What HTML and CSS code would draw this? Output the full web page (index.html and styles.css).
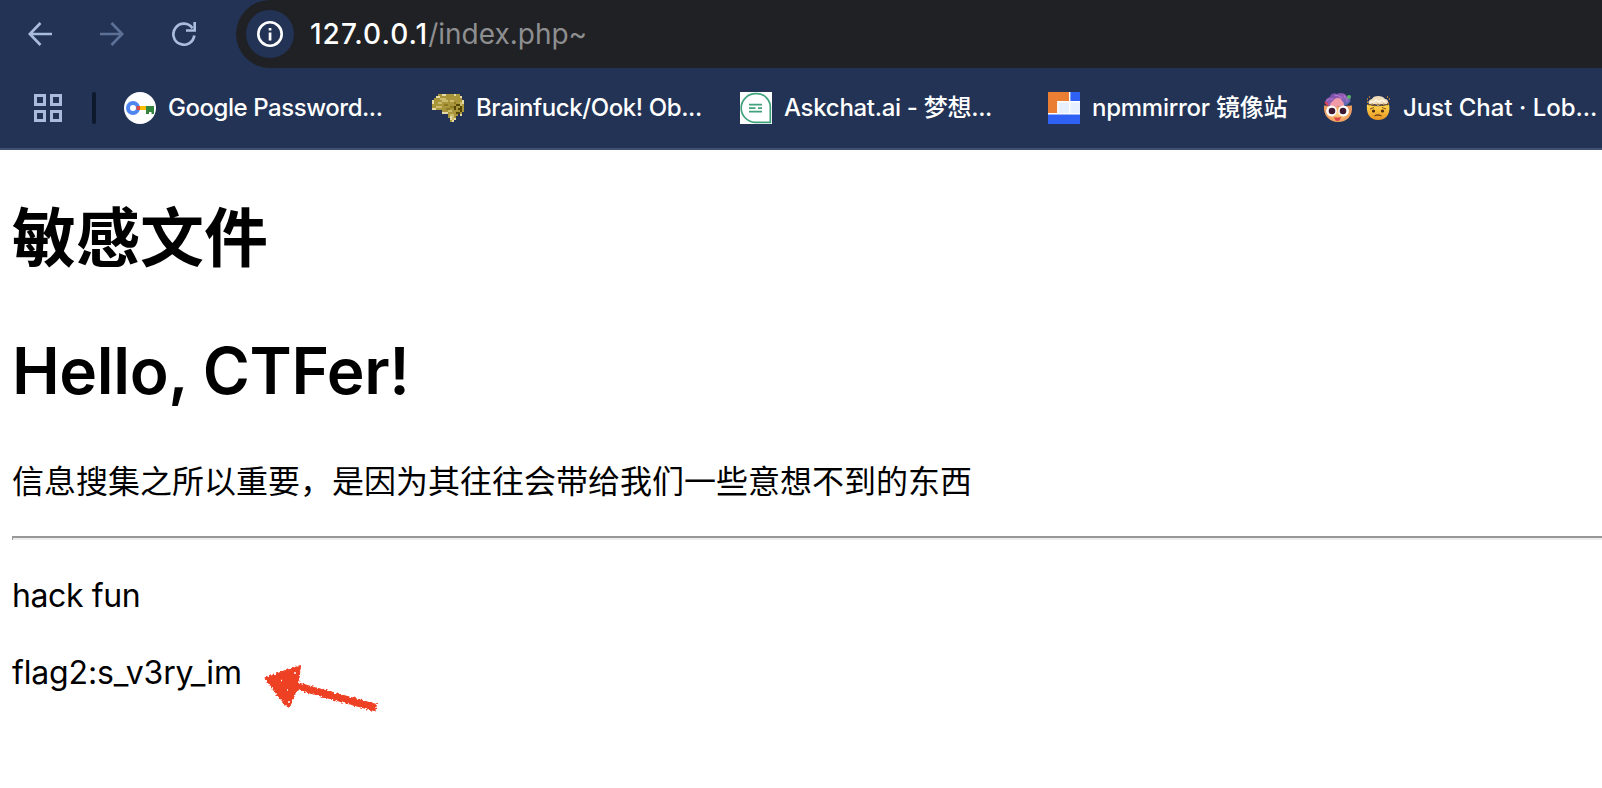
FILE: index.html
```html
<!DOCTYPE html>
<html lang="zh-CN">
<head>
  <meta charset="UTF-8">
  <meta name="viewport" content="width=device-width, initial-scale=1.0">
  <title>index.php~</title>
  <link rel="stylesheet" href="styles.css">
</head>
<body>

  <header class="browser">
    <div class="toolbar">
      <nav class="nav-buttons">
        <svg class="nav-icon" viewBox="0 0 24 24"><path d="M24 12H2M12.5 1 1.8 12l10.7 11"/></svg>
        <svg class="nav-icon disabled" viewBox="0 0 24 24"><path d="M0 12h22M11.5 1l10.700 11-10.700 11"/></svg>
        <svg class="nav-icon" viewBox="0 0 24 24"><path d="M22.300 13.500A10.500 10.500 0 1 1 20.500 6.200"/><path d="M22.700 0v8.500H14"/></svg>
      </nav>
      <div class="address-bar">
        <span class="site-info">
          <svg width="26" height="26" viewBox="0 0 26 26"><circle cx="13" cy="13" r="11.700" fill="none" stroke="#fff" stroke-width="2.600"/><path d="M11.700 7h2.700v2.400h-2.700zM11.700 11.500h2.700v8h-2.700z" fill="#fff"/></svg>
        </span>
        <span class="url"><span class="host">127.0.0.1</span><span class="path">/index.php~</span></span>
      </div>
    </div>

    <div class="bookmarks">
      <svg class="apps" viewBox="0 0 28 28"><path d="M1.500 1.500h9v9h-9zM17.500 1.500h9v9h-9zM1.500 17.500h9v9h-9zM17.500 17.500h9v9h-9z"/></svg>
      <span class="separator"></span>

      <a class="bookmark">
        <svg class="favicon" viewBox="0 0 32 32">
          <circle cx="16" cy="16" r="16" fill="#fff"/>
          <path d="M16 14h6v4h-6z" fill="#fbbc04"/>
          <path d="M22 14h8v8h-2.500v-2h-2.500v2h-3z" fill="#34853d"/>
          <circle cx="9" cy="16" r="5" fill="none" stroke="#4f86f0" stroke-width="4"/>
          <path d="M12.500 14h3.500v4h-3.500z" fill="#dc4a3d"/>
        </svg>
        <span class="label google">Google Password...</span>
      </a>

      <a class="bookmark">
        <svg class="favicon" viewBox="0 0 16 16" shape-rendering="crispEdges">
          <path d="M3 1h11v1h1v2h1v6h-1v1h-2v1h-1v2h-1v1H9v-2H8v-2H7v-1H5V9H1V8H0V4h1V3h1V2h1z" fill="#aa963a"/>
          <path d="M5 1h2v1H5zM2 2h2v1H2zM11 1h1v1h-1zM0 4h1v2H0zM14 2h1v1h-1zM15 4h1v2h-1zM0 8h2v1H0zM5 10h3v1H5zM9 12h1v2H9zM11 13h1v1h-1zM10 14h1v1h-1zM14 11h1v1h-1z" fill="#e5d9a6"/>
          <path d="M4 3h3v1H4zM3 5h2v1H3zM5 4h3v1H5zM9 4h2v1H9zM2 7h3v1H2zM8 9h2v1H8zM9 11h2v1H9zM10 12h1v2h-1zM14 5h1v2h-1z" fill="#cbbb6c"/>
          <path d="M6 6h2v1H6zM9 7h2v1H9zM7 8h2v1H7zM11 5h1v1h-1z" fill="#8d7a25"/>
          <path d="M12 6h2v1h-2zM11 7h1v2h-1zM14 7h1v3h-1zM12 10h2v1h-2zM13 8h1v1h-1z" fill="#564606"/>
        </svg>
        <span class="label brain">Brainfuck/Ook! Ob...</span>
      </a>

      <a class="bookmark">
        <svg class="favicon" viewBox="0 0 32 32">
          <path d="M0 0h32v32H0z" fill="#fff"/>
          <path d="M16 1.700h1A13.500 13.500 0 0 1 30.300 15v15.300H15A14.300 14.300 0 0 1 16 1.700z" fill="none" stroke="#42a27d" stroke-width="1.700"/>
          <path d="M9 12.700h13M9 19.700h13M9 16.200h6.500M18 16.200h4" stroke="#42a27d" stroke-width="1.700"/>
        </svg>
        <span class="label ask">Askchat.ai - 梦想...</span>
      </a>

      <a class="bookmark npm-item">
        <svg class="favicon" viewBox="0 0 32 32">
          <path d="M0 0h32v32H0z" fill="#2f62f4"/>
          <path d="M0 0h21v10H10v11H0z" fill="#ea7e32"/>
          <path d="M10 10h22v11H10z" fill="#e6f0ff"/>
          <path d="M21.700 0v21.500M9.800 21V9.800H32M0 21.700h32" fill="none" stroke="#fff" stroke-width="1.400"/>
        </svg>
        <span class="label npm">npmmirror 镜像站</span>
      </a>

      <a class="bookmark lobe-item">
        <svg class="favicon" viewBox="0 0 32 32">
          <defs>
            <linearGradient id="cloud" x1="0" y1="0" x2="1" y2="1"><stop offset="0" stop-color="#5f459f"/><stop offset=".5" stop-color="#9a60b6"/><stop offset="1" stop-color="#406fae"/></linearGradient>
            <radialGradient id="skin"><stop offset="0" stop-color="#ffd184"/><stop offset="1" stop-color="#ed9b5d"/></radialGradient>
          </defs>
          <path d="M2 13.500Q15 15 30 13.500C31 24 25 30 16 30S1 23 2 13.500z" fill="url(#skin)"/>
          <path d="M4 12C2 9 5 5 8 5 8 2 12 0 15 2c3-2 9-1 10 3 3 0 5 4 2 6-1 2-4 3-7 3H9c-2 0-4 0-5-2z" fill="url(#cloud)"/>
          <path d="M8 14c0-3 2-4 3-5 2-4 8-4 9 0 2 1 2 4 2 5l-3 1-3-1-3 2z" fill="#f19ba8"/>
          <path d="M4 9q3-3 7-2M22 4q4 2 3 6M12 3q5 0 8 3" fill="none" stroke="#b77bd4"/>
          <path d="M3 10l3 3" stroke="#df4054" stroke-width="2"/>
          <circle cx="27" cy="5" r="2" fill="#5bb766"/>
          <circle cx="9.500" cy="19" r="5.400" fill="#fff"/><circle cx="21.500" cy="19" r="5.400" fill="#fff"/>
          <circle cx="10" cy="19" r="3.300" fill="#3e1931"/><circle cx="21" cy="19" r="3.300" fill="#3e1931"/>
          <path d="M12 25q3.500 1 7 0-1 4-3.500 4T12 25z" fill="#d94345"/>
        </svg>
        <svg class="emoji" viewBox="0 0 24 24">
          <defs><linearGradient id="face" x2="0" y2="1"><stop stop-color="#ffd94b"/><stop offset="1" stop-color="#e99524"/></linearGradient></defs>
          <path d="M1 8.500Q12 12 23 8.500C25 18 20 24 12 24S0 18 1 8.500z" fill="url(#face)"/>
          <path d="M3 8C1 5 5 3 6 3c1-4 11-4 13 0 3 0 4 3 2 5l-4 1-2-1-3 2-3-2-3 1z" fill="#efdcbb"/>
          <path d="M4 6h4l2-2 3 2 3-2 4 2" fill="none" stroke="#fff6df" stroke-width="1.500"/>
          <path d="M2 9l5-1 1 2 4-2 3 2 2-2 5 1" fill="none" stroke="#8f5821" stroke-width=".9"/>
          <path d="M1 3h1M3 1h1M21 1h1M23 3h1M1 6h1M22 7h1" stroke="#e28b28" stroke-width="1.500"/>
          <path d="M4 13l4-1.500M20 13l-4-1.500" stroke="#8a4e16"/>
          <circle cx="7.500" cy="15" r="1.600" fill="#4b2a12"/><circle cx="16.500" cy="15" r="1.600" fill="#4b2a12"/>
          <path d="M8 20.500c1-3 7-3 8 0-2-1-6-1-8 0z" fill="#693a16"/>
        </svg>
        <span class="label lobe">Just Chat · Lob...</span>
      </a>
    </div>
  </header>

  <main class="page">
    <h1 class="title-cn">敏感文件</h1>
    <h1 class="title-en">Hello, CTFer!</h1>
    <p class="intro">信息搜集之所以重要，是因为其往往会带给我们一些意想不到的东西</p>
    <hr>
    <p class="hack">hack fun</p>
    <div class="flag-row">
      <p class="flag">flag2:s_v3ry_im</p>
      <svg class="arrow" viewBox="0 0 124 60">
        <filter id="rough" x="-10%" y="-10%" width="120%" height="120%">
          <feTurbulence type="fractalNoise" baseFrequency=".45" numOctaves="2" seed="4" result="noise"/>
          <feDisplacementMap in="SourceGraphic" in2="noise" scale="4.500" xChannelSelector="R" yChannelSelector="G"/>
        </filter>
        <path d="M5.500 23 41.500 10.500 39.500 28 117.500 49.500 116 56 38 34.500 31 51 27.500 51 16 37z" fill="#ee4023" stroke="#ee4023" stroke-linejoin="round" filter="url(#rough)"/>
        <path d="M22 25.500h1M36 17v2M30 46v2M28 35h1" stroke="#fff" stroke-width="1.500"/>
      </svg>
    </div>
  </main>

</body>
</html>
```

FILE: styles.css
```css
body {
  margin: 0;
  background-color: white;
  color: black;
  font-family: Inter, "Noto Sans CJK SC", sans-serif;
  overflow: hidden;
}
.browser {
  box-sizing: border-box;
  height: 150px;
  background-color: #223356;
  border-bottom: 2px solid #3f5074;
}
.toolbar {
  display: flex;
  height: 68px;
}
.nav-buttons {
  display: flex;
  align-items: center;
  gap: 48px;
  width: 208px;
  padding-left: 28px;
}
.nav-icon {
  width: 24px;
  height: 24px;
  fill: none;
  stroke: #a9bcdc;
  stroke-width: 2.7;
}
.nav-icon.disabled {
  stroke: #5d7095;
}
.address-bar {
  display: flex;
  flex: 1;
  align-items: center;
  padding-left: 10px;
  border-radius: 34px 0 0 34px;
  background-color: #202124;
}
.site-info {
  display: flex;
  align-items: center;
  justify-content: center;
  width: 48px;
  height: 48px;
  margin-right: 16px;
  border-radius: 50%;
  background-color: #223356;
}
.url {
  font-size: 28px;
  line-height: 40px;
  white-space: nowrap;
}
.host {
  color: white;
  font-weight: 500;
  letter-spacing: 1px;
}
.path {
  color: #8e8f91;
}

.bookmarks {
  display: flex;
  align-items: center;
  height: 80px;
  padding-left: 34px;
}
.apps {
  width: 28px;
  height: 28px;
  fill: none;
  stroke: #a9bcdc;
  stroke-width: 3;
}
.separator {
  width: 4px;
  height: 32px;
  margin: 0 28px 0 30px;
  border-radius: 2px;
  background-color: #0e192e;
}
.bookmark {
  display: flex;
  flex: none;
  align-items: center;
  width: 308px;
  color: white;
  font-size: 24px;
  font-weight: 500;
  line-height: 32px;
  white-space: nowrap;
}
.google {
  letter-spacing: -0.45px;
}
.brain {
  letter-spacing: -0.4px;
}
.ask {
  letter-spacing: -0.3px;
}
.npm {
  letter-spacing: -0.25px;
}
.lobe {
  padding-left: 1px;
}
.npm-item {
  width: 274px;
}
.lobe-item {
  width: 280px;
}
.favicon {
  flex: none;
  width: 32px;
  height: 32px;
  margin-right: 12px;
}
.emoji {
  flex: none;
  width: 24px;
  height: 24px;
  margin-right: 12px;
}

.page {
  padding-left: 12px;
}
h1 {
  margin: 0;
  font-size: 64px;
  line-height: 92px;
}
.title-cn {
  padding-top: 42px;
}
.title-en {
  padding-top: 41px;
  font-weight: 600;
  letter-spacing: -0.35px;
}
p {
  margin: 0;
  font-size: 32px;
  line-height: 44px;
}
.intro {
  padding-top: 43px;
}
hr {
  height: 2px;
  margin: 32px 0 0;
  border: 0;
  border-top: 2px solid #989898;
  border-left: 1px solid #989898;
  background-color: #eee;
}
.hack {
  padding-top: 34px;
  letter-spacing: -0.4px;
}
.flag-row {
  display: flex;
  align-items: flex-start;
  padding-top: 33px;
}
.flag {
  width: 247px;
  letter-spacing: -0.15px;
}
.arrow {
  width: 124px;
  height: 60px;
  margin-top: 4px;
}
```
